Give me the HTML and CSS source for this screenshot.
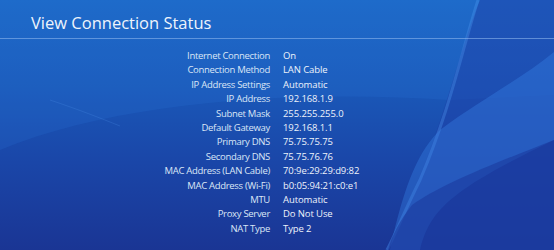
FILE: index.html
```html
<!DOCTYPE html>
<html>
<head>
    <title>View Connection Status</title>
    <link rel="stylesheet" href="styles.css">
</head>
<body>
    <div class="screen">
        <svg class="waves" width="554" height="250" viewBox="0 0 554 250">
            <path d="M0 150 C120 100 300 90 450 100 L554 95 L554 0 L0 0 Z" fill="#2a7ae0" opacity="0.18"/>
            <path d="M50 100 C80 110 100 118 120 126" stroke="#4d8fe8" stroke-width="1" fill="none" opacity="0.25"/>
            <path d="M480 0 C455 60 440 150 385 250 L554 250 L554 0 Z" fill="#1d3fa8" opacity="0.5"/>
            <path d="M478 0 C462 50 450 110 420 180 C405 210 395 235 387 250" stroke="#4c97f0" stroke-width="3" fill="none" opacity="0.35"/>
            <path d="M554 52 C520 80 480 100 440 130 C420 150 405 180 390 250 L420 250 C430 210 450 190 554 140 Z" fill="#3a86ea" opacity="0.35"/>
            <path d="M554 140 C490 165 440 185 412 205 C400 220 392 235 388 250 L554 250 Z" fill="#1a3a9e" opacity="0.6"/>
        </svg>
        <h1 class="title">View Connection Status</h1>
        <div class="status">
            <div class="label">Internet Connection</div><div class="value">On</div>
            <div class="label">Connection Method</div><div class="value">LAN Cable</div>
            <div class="label">IP Address Settings</div><div class="value">Automatic</div>
            <div class="label">IP Address</div><div class="value">192.168.1.9</div>
            <div class="label">Subnet Mask</div><div class="value">255.255.255.0</div>
            <div class="label">Default Gateway</div><div class="value">192.168.1.1</div>
            <div class="label">Primary DNS</div><div class="value">75.75.75.75</div>
            <div class="label">Secondary DNS</div><div class="value">75.75.76.76</div>
            <div class="label">MAC Address (LAN Cable)</div><div class="value">70:9e:29:29:d9:82</div>
            <div class="label">MAC Address (Wi-Fi)</div><div class="value">b0:05:94:21:c0:e1</div>
            <div class="label">MTU</div><div class="value">Automatic</div>
            <div class="label">Proxy Server</div><div class="value">Do Not Use</div>
            <div class="label">NAT Type</div><div class="value">Type 2</div>
        </div>
    </div>
</body>
</html>
```

FILE: styles.css
```css
body {
    margin: 0;
    background-color: #1a3d9e;
    font-family: "Open Sans", Arial, sans-serif;
}

.screen {
    position: relative;
    width: 554px;
    height: 250px;
    overflow: hidden;
    background: linear-gradient(180deg, #1b68c6 0%, #1a58b8 35%, #1a46a8 65%, #1a3594 100%);
}

.waves {
    position: absolute;
    left: 0;
    top: 0;
}

.title {
    position: relative;
    margin: 0;
    height: 39px;
    box-sizing: border-box;
    padding: 13px 0 0 31px;
    font-size: 16.5px;
    font-weight: normal;
    line-height: 20px;
    color: #eef4fc;
    border-bottom: 1px solid rgba(150, 190, 240, 0.55);
}

.status {
    position: relative;
    display: grid;
    grid-template-columns: 270px 1fr;
    column-gap: 13px;
    padding-top: 10px;
    font-size: 9.5px;
    line-height: 14.4px;
}

.label {
    text-align: right;
    letter-spacing: -0.3px;
    color: #dbe6f6;
}

.value {
    letter-spacing: -0.1px;
    color: #eef3fb;
}
```
